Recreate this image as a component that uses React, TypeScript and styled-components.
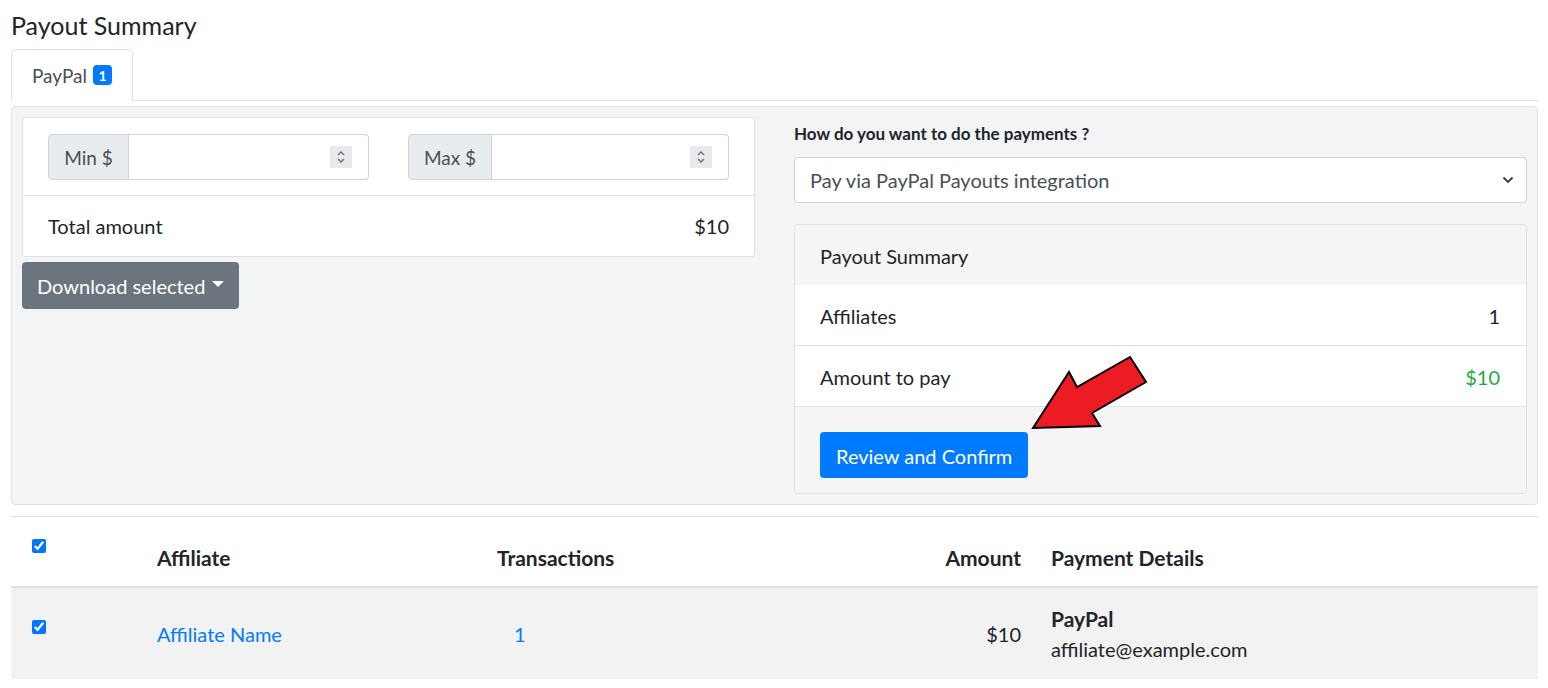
import React from 'react';
import styled, { createGlobalStyle } from 'styled-components';

const FONT = `"Lato", "Open Sans", sans-serif`;

const Global = createGlobalStyle`
  html, body { margin: 0; padding: 0; background: #fff; }
  body { font-family: ${FONT}; color: #212529; font-size: 20px; }
  * { box-sizing: border-box; }
`;

const Page = styled.div`
  position: relative;
  padding: 0 10px 0 11px;
`;

const Title = styled.h1`
  margin: 0;
  height: 49px;
  font-size: 25px;
  font-weight: 400;
  line-height: 50px;
`;

const TabBar = styled.div`
  display: flex;
  height: 52px;
  border-bottom: 1px solid #dee2e6;
`;

const Tab = styled.div`
  display: flex;
  align-items: center;
  gap: 6px;
  width: 122px;
  height: 52px;
  padding: 0 20px;
  background: #fff;
  border: 1px solid #dee2e6;
  border-bottom-color: #fff;
  border-radius: 5px 5px 0 0;
  color: #495057;
  font-size: 19px;
`;

const Badge = styled.span`
  display: inline-flex;
  align-items: center;
  justify-content: center;
  width: 20px;
  height: 20px;
  border-radius: 4px;
  background: #007bff;
  color: #fff;
  font-size: 14px;
  font-weight: 700;
`;

const Panel = styled.div`
  margin-top: 5px;
  display: grid;
  grid-template-columns: 1fr 1fr;
  column-gap: 39px;
  padding: 10px;
  background: #f3f4f6;
  border: 1px solid #dee2e6;
  border-radius: 4px;
`;

const Column = styled.div`
  display: flex;
  flex-direction: column;
  align-items: stretch;
`;

const FilterCard = styled.div`
  background: #fff;
  border: 1px solid #dee2e6;
  border-radius: 3px;
`;

const InputsRow = styled.div`
  display: grid;
  grid-template-columns: 1fr 1fr;
  column-gap: 39px;
  padding: 16px 25px 15px;
  border-bottom: 1px solid #dee2e6;
`;

const InputGroup = styled.div`
  display: flex;
  height: 46px;
`;

const Prefix = styled.span<{ $w: number }>`
  display: flex;
  align-items: center;
  justify-content: center;
  flex: none;
  width: ${(p) => p.$w}px;
  background: #e9ecef;
  border: 1px solid #ced4da;
  border-radius: 4px 0 0 4px;
  color: #495057;
  font-size: 19px;
  white-space: nowrap;
`;

const Field = styled.div`
  flex: 1;
  display: flex;
  align-items: center;
  justify-content: flex-end;
  padding-right: 16px;
  background: #fff;
  border: 1px solid #ced4da;
  border-left: none;
  border-radius: 0 4px 4px 0;
`;

const Spinner = styled.span`
  display: flex;
  align-items: center;
  justify-content: center;
  width: 22px;
  height: 22px;
  background: #e9e9ed;
`;

const TotalRow = styled.div`
  display: flex;
  align-items: center;
  justify-content: space-between;
  height: 60px;
  padding: 0 25px;
  font-size: 20px;
`;

const DownloadButton = styled.button`
  align-self: flex-start;
  display: inline-flex;
  align-items: center;
  gap: 7px;
  margin-top: 5px;
  height: 47px;
  padding: 0 15px;
  background: #6c757d;
  border: none;
  border-radius: 4px;
  color: #fff;
  font-family: ${FONT};
  font-size: 20px;
`;

const Caret = styled.span`
  width: 0;
  height: 0;
  border-left: 6px solid transparent;
  border-right: 6px solid transparent;
  border-top: 6px solid #fff;
  margin-bottom: 3px;
`;

const QuestionLabel = styled.label`
  display: block;
  height: 34px;
  margin-bottom: 6px;
  line-height: 34px;
  font-size: 17px;
  font-weight: 700;
`;

const Select = styled.div`
  display: flex;
  align-items: center;
  justify-content: space-between;
  height: 46px;
  padding: 0 12px 0 15px;
  background: #fff;
  border: 1px solid #ced4da;
  border-radius: 4px;
  color: #495057;
  font-size: 20px;
`;

const SummaryCard = styled.div`
  margin-top: 21px;
  border: 1px solid #dee2e6;
  border-radius: 4px;
  overflow: hidden;
  font-size: 20px;
`;

const SummaryHeader = styled.div`
  display: flex;
  align-items: center;
  height: 60px;
  padding: 1px 25px 0;
  background: #f5f5f5;
`;

const SummaryRow = styled.div`
  display: flex;
  align-items: center;
  justify-content: space-between;
  height: 61px;
  padding: 1px 26px 0 25px;
  background: #fff;
  border-bottom: 1px solid #dee2e6;
`;

const Value = styled.span<{ $green?: boolean }>`
  color: ${(p) => (p.$green ? '#28a745' : '#212529')};
`;

const SummaryFooter = styled.div`
  padding: 25px 25px 15px;
  background: #f5f5f5;
`;

const PrimaryButton = styled.button`
  height: 46px;
  padding: 1px 16px 0;
  background: #007bff;
  border: none;
  border-radius: 4px;
  color: #fff;
  font-family: ${FONT};
  font-size: 20px;
`;

const Arrow = styled.svg`
  position: absolute;
  left: 1030px;
  top: 354px;
`;

const Table = styled.table`
  width: 100%;
  margin-top: 11px;
  border-collapse: collapse;
  table-layout: fixed;
  border-top: 1px solid #dee2e6;
`;

const Th = styled.th<{ $align?: string }>`
  height: 70px;
  padding: 0 15px 13px;
  vertical-align: bottom;
  text-align: ${(p) => p.$align || 'left'};
  font-size: 21px;
  font-weight: 700;
  line-height: 30px;
  border-bottom: 2px solid #dee2e6;
`;

const CheckCell = styled.td<{ $top: number }>`
  padding: ${(p) => p.$top}px 0 0 21px;
  vertical-align: top;
  border-bottom: ${(p) => (p.$top < 30 ? '2px solid #dee2e6' : 'none')};
`;

const Check = styled.input`
  display: block;
  width: 14px;
  height: 14px;
  margin: 0;
  accent-color: #0075ff;
`;

const Row = styled.tr`
  background: #f2f2f2;
`;

const Td = styled.td<{ $align?: string; $pl?: number }>`
  padding: 15px 15px 14px ${(p) => p.$pl ?? 15}px;
  vertical-align: middle;
  text-align: ${(p) => p.$align || 'left'};
  font-size: 20px;
  line-height: 30px;
`;

const Link = styled.a`
  color: #007bff;
  text-decoration: none;
`;

const Strong = styled.div`
  font-weight: 700;
  font-size: 21px;
  line-height: 31px;
`;

const Email = styled.div`
  line-height: 31px;
`;

const SpinIcon = () => (
  <svg width="10" height="16" viewBox="0 0 10 16" fill="none" stroke="#6b6b70" strokeWidth="1.3">
    <path d="M2 6 L5 3 L8 6" />
    <path d="M2 10 L5 13 L8 10" />
  </svg>
);

export default function App() {
  return (
    <>
      <Global />
      <Page>
        <Title>Payout Summary</Title>
        <TabBar>
          <Tab>
            PayPal <Badge>1</Badge>
          </Tab>
        </TabBar>
        <Panel>
          <Column>
            <FilterCard>
              <InputsRow>
                <InputGroup>
                  <Prefix $w={81}>Min $</Prefix>
                  <Field>
                    <Spinner>
                      <SpinIcon />
                    </Spinner>
                  </Field>
                </InputGroup>
                <InputGroup>
                  <Prefix $w={84}>Max $</Prefix>
                  <Field>
                    <Spinner>
                      <SpinIcon />
                    </Spinner>
                  </Field>
                </InputGroup>
              </InputsRow>
              <TotalRow>
                <span>Total amount</span>
                <span>$10</span>
              </TotalRow>
            </FilterCard>
            <DownloadButton>
              Download selected <Caret />
            </DownloadButton>
          </Column>
          <Column>
            <QuestionLabel>How do you want to do the payments ?</QuestionLabel>
            <Select>
              <span>Pay via PayPal Payouts integration</span>
              <svg width="12" height="8" viewBox="0 0 12 8" fill="none" stroke="#343a40" strokeWidth="1.8">
                <path d="M1.5 1.5 L6 6 L10.5 1.5" />
              </svg>
            </Select>
            <SummaryCard>
              <SummaryHeader>Payout Summary</SummaryHeader>
              <SummaryRow>
                <span>Affiliates</span>
                <Value>1</Value>
              </SummaryRow>
              <SummaryRow>
                <span>Amount to pay</span>
                <Value $green>$10</Value>
              </SummaryRow>
              <SummaryFooter>
                <PrimaryButton>Review and Confirm</PrimaryButton>
              </SummaryFooter>
            </SummaryCard>
          </Column>
        </Panel>
        <Table>
          <colgroup>
            <col style={{ width: 131 }} />
            <col style={{ width: 340 }} />
            <col style={{ width: 300 }} />
            <col style={{ width: 254 }} />
            <col />
          </colgroup>
          <thead>
            <tr>
              <CheckCell as="th" $top={22}>
                <Check type="checkbox" defaultChecked />
              </CheckCell>
              <Th>Affiliate</Th>
              <Th>Transactions</Th>
              <Th $align="right">Amount</Th>
              <Th>Payment Details</Th>
            </tr>
          </thead>
          <tbody>
            <Row>
              <CheckCell $top={32}>
                <Check type="checkbox" defaultChecked />
              </CheckCell>
              <Td>
                <Link href="#">Affiliate Name</Link>
              </Td>
              <Td $pl={32}>
                <Link href="#">1</Link>
              </Td>
              <Td $align="right">$10</Td>
              <Td>
                <Strong>PayPal</Strong>
                <Email>affiliate@example.com</Email>
              </Td>
            </Row>
          </tbody>
        </Table>
        <Arrow width="122" height="80" viewBox="0 0 122 80">
          <polygon
            points="3,74 39,18 47,33 100,3 116,28 62,59 70,72"
            fill="#ed1c24"
            stroke="#000"
            strokeWidth="2"
            strokeLinejoin="miter"
          />
        </Arrow>
      </Page>
    </>
  );
}
